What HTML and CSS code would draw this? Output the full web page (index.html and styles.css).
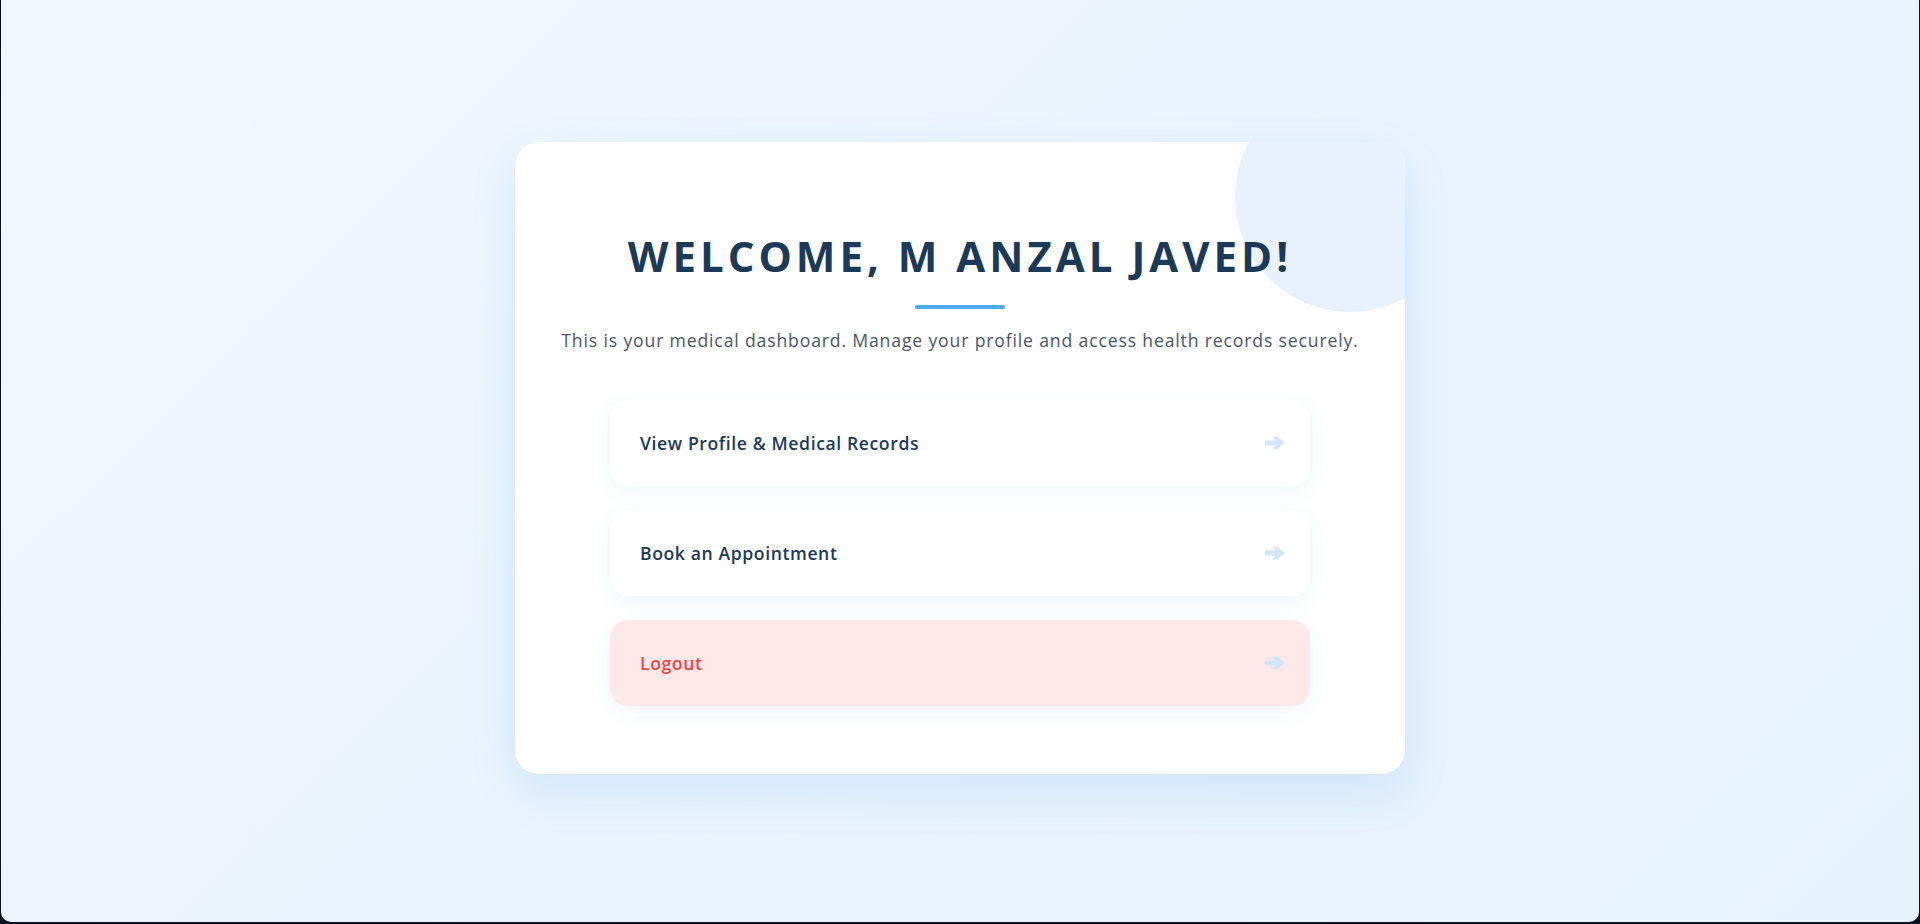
FILE: index.html
```html
<!DOCTYPE html>
<html lang="en">
<head>
<meta charset="utf-8">
<title>Dashboard</title>
<link rel="stylesheet" href="styles.css">
</head>
<body>
<div class="page">
  <main class="card">
    <div class="blob"></div>
    <h1 class="title">WELCOME, M ANZAL JAVED!</h1>
    <div class="bar"></div>
    <p class="subtitle">This is your medical dashboard. Manage your profile and access health records securely.</p>
    <nav class="actions">
      <a class="action" href="#">
        <span>View Profile &amp; Medical Records</span>
        <svg class="arrow" width="20" height="14" viewBox="0 0 20 14"><path d="M0 4.6 H10.5 L7.6 0.6 H12.2 L19.6 7 L12.2 13.4 H7.6 L10.5 9.4 H0 Z" fill="currentColor"/></svg>
      </a>
      <a class="action" href="#">
        <span>Book an Appointment</span>
        <svg class="arrow" width="20" height="14" viewBox="0 0 20 14"><path d="M0 4.6 H10.5 L7.6 0.6 H12.2 L19.6 7 L12.2 13.4 H7.6 L10.5 9.4 H0 Z" fill="currentColor"/></svg>
      </a>
      <a class="action logout" href="#">
        <span>Logout</span>
        <svg class="arrow" width="20" height="14" viewBox="0 0 20 14"><path d="M0 4.6 H10.5 L7.6 0.6 H12.2 L19.6 7 L12.2 13.4 H7.6 L10.5 9.4 H0 Z" fill="currentColor"/></svg>
      </a>
    </nav>
  </main>
</div>
</body>
</html>
```

FILE: styles.css
```css
* { box-sizing: border-box; }

html {
  background: #0d1220;
}

body {
  margin: 0;
  font-family: "Open Sans", "Noto Sans", sans-serif;
}

.page {
  height: calc(100vh - 2px);
  margin: 0 1px 2px 1px;
  border-radius: 0 0 10px 10px;
  background: linear-gradient(135deg, #f0f7ff 0%, #eaf4fe 50%, #e6f2fc 100%);
  display: flex;
  align-items: center;
  justify-content: center;
  padding-bottom: 6px;
}

.card {
  position: relative;
  overflow: hidden;
  width: 890px;
  background: #ffffff;
  border-radius: 24px;
  padding: 89px 0 68px;
  box-shadow: 0 18px 45px rgba(66, 145, 230, 0.15);
  display: flex;
  flex-direction: column;
  align-items: center;
}

.blob {
  position: absolute;
  top: -60px;
  right: -60px;
  width: 230px;
  height: 230px;
  border-radius: 50%;
  background: #e7f2fe;
}

.title {
  position: relative;
  margin: 0;
  font-size: 42px;
  line-height: 1.2;
  font-weight: 700;
  letter-spacing: 4px;
  color: #1b3a5a;
}

.bar {
  width: 90px;
  height: 4px;
  border-radius: 2px;
  background: #4dabf5;
  margin: 24px 0 17px;
}

.subtitle {
  margin: 0;
  font-size: 17.6px;
  line-height: 1.6;
  letter-spacing: 0.85px;
  color: #4a5568;
}

.actions {
  width: 700px;
  margin-top: 46px;
  display: flex;
  flex-direction: column;
  gap: 24px;
}

.action {
  display: flex;
  align-items: center;
  justify-content: space-between;
  height: 86px;
  padding: 0 25px 0 30px;
  border-radius: 18px;
  background: #ffffff;
  box-shadow: 0 5px 18px rgba(90, 150, 220, 0.1);
  text-decoration: none;
  font-size: 17.6px;
  line-height: 1.6;
  font-weight: 600;
  letter-spacing: 0.6px;
  color: #1b3a5a;
}

.arrow {
  color: #cfe6fb;
  display: block;
}

.logout {
  background: #fee8e8;
  color: #f24444;
}
```
